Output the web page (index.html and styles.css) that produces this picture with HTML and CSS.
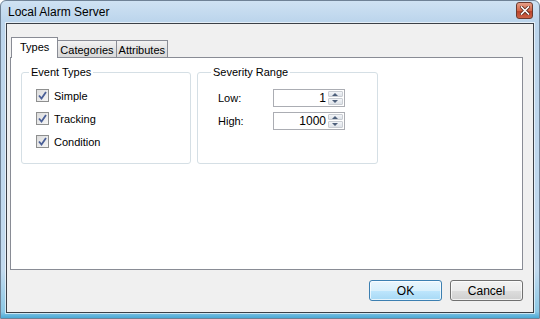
FILE: index.html
```html
<!DOCTYPE html>
<html lang="en">
<head>
    <meta charset="UTF-8">
    <title>Local Alarm Server</title>
    <link rel="stylesheet" href="styles.css">
</head>
<body>
    <div class="window">
        <div class="titlebar">
            <span class="title">Local Alarm Server</span>
            <span class="closeBtn">
                <svg width="10" height="9" viewBox="0 0 10 9">
                    <path d="M1.5 1 L8.5 8 M8.5 1 L1.5 8" stroke="#5a2a1c" stroke-width="3.2" stroke-linecap="square"/>
                    <path d="M1.5 1 L8.5 8 M8.5 1 L1.5 8" stroke="#ffffff" stroke-width="1.6" stroke-linecap="square"/>
                </svg>
            </span>
        </div>

        <div class="client">
            <div class="tabs">
                <span class="tab selected">Types</span>
                <span class="tab">Categories</span>
                <span class="tab">Attributes</span>
            </div>

            <div class="panel">
                <fieldset class="group groupTypes">
                    <legend>Event Types</legend>
                    <label class="check"><span class="box"><svg width="9" height="9" viewBox="0 0 9 9"><path d="M1 4.5 L3.5 7.5 L8 1" fill="none" stroke="#4a5f97" stroke-width="1.8"/></svg></span>Simple</label>
                    <label class="check"><span class="box"><svg width="9" height="9" viewBox="0 0 9 9"><path d="M1 4.5 L3.5 7.5 L8 1" fill="none" stroke="#4a5f97" stroke-width="1.8"/></svg></span>Tracking</label>
                    <label class="check"><span class="box"><svg width="9" height="9" viewBox="0 0 9 9"><path d="M1 4.5 L3.5 7.5 L8 1" fill="none" stroke="#4a5f97" stroke-width="1.8"/></svg></span>Condition</label>
                </fieldset>

                <fieldset class="group groupRange">
                    <legend>Severity Range</legend>
                    <div class="row">
                        <span class="rowLabel">Low:</span>
                        <span class="spinner">
                            <span class="value">1</span>
                            <span class="arrows"><span class="up"></span><span class="down"></span></span>
                        </span>
                    </div>
                    <div class="row">
                        <span class="rowLabel">High:</span>
                        <span class="spinner">
                            <span class="value">1000</span>
                            <span class="arrows"><span class="up"></span><span class="down"></span></span>
                        </span>
                    </div>
                </fieldset>
            </div>

            <div class="buttons">
                <button class="btn default">OK</button>
                <button class="btn">Cancel</button>
            </div>
        </div>
    </div>
</body>
</html>
```

FILE: styles.css
```css
body {
    margin: 0;
    font-family: "Liberation Sans", Arial, sans-serif;
    font-size: 11px;
    color: #000;
    background: #fff;
}

.window {
    width: 540px;
    height: 319px;
    box-sizing: border-box;
    border: 1px solid #6f8296;
    border-radius: 6px 6px 0 0;
    background: linear-gradient(#cfe2f3, #bcd5ec 20px, #c2daee 85%, #8cc9e6 98%, #4aa9d6);
    padding: 0 5px 5px 5px;
    display: flex;
    flex-direction: column;
}

.titlebar {
    height: 23px;
    display: flex;
    align-items: center;
    justify-content: space-between;
}

.title {
    padding-left: 2px;
    font-size: 12px;
    margin-top: -1px;
}

.closeBtn {
    width: 15px;
    height: 15px;
    margin-top: -3px;
    margin-right: 1px;
    border: 1px solid #6c3a2e;
    border-radius: 3px;
    background: linear-gradient(#e59f88, #d5684a 50%, #b9422a 55%, #cc6246);
    display: flex;
    align-items: center;
    justify-content: center;
}

.client {
    flex: 1;
    border: 1px solid #3b4047;
    box-shadow: 0 0 0 1px rgba(255, 255, 255, 0.6);
    background: #f0f0f0;
    padding: 13px 10px 11px 3px;
    display: flex;
    flex-direction: column;
}

.tabs {
    height: 20px;
    display: flex;
    align-items: flex-end;
    padding-left: 1px;
    position: relative;
    z-index: 1;
}

.tab {
    height: 17px;
    box-sizing: border-box;
    padding: 2px 2px 0 2px;
    border: 1px solid #898c95;
    border-bottom: none;
    margin-right: -1px;
    background: linear-gradient(#f2f2f2, #e3e3e3 50%, #d9d9d9);
    display: flex;
    align-items: center;
}

.tab.selected {
    height: 21px;
    margin-bottom: -1px;
    padding: 3px 8px 0 8px;
    background: #fff;
    align-items: flex-start;
}

.panel {
    height: 213px;
    box-sizing: border-box;
    border: 1px solid #898c95;
    background: #fff;
    padding: 8px 10px;
    display: flex;
    gap: 6px;
}

.group {
    margin: 0;
    height: 98px;
    box-sizing: border-box;
    border: 1px solid #d5dfe5;
    border-radius: 3px;
    padding: 6px 0 0 14px;
}

.group legend {
    padding: 0 2px;
    margin-left: -7px;
}

.groupTypes {
    width: 170px;
}

.groupRange {
    width: 181px;
    padding: 8px 0 0 20px;
}

.check {
    display: flex;
    align-items: center;
    height: 23px;
}

.box {
    width: 11px;
    height: 11px;
    border: 1px solid #8e8f8f;
    background: linear-gradient(135deg, #dcdcdc, #f6f6f6);
    margin-right: 5px;
    display: flex;
    align-items: center;
    justify-content: center;
}

.row {
    display: flex;
    align-items: center;
    height: 23px;
}

.rowLabel {
    width: 55px;
}

.spinner {
    width: 72px;
    height: 18px;
    box-sizing: border-box;
    border: 1px solid #abadb3;
    display: flex;
}

.value {
    flex: 1;
    text-align: right;
    padding-right: 1px;
    line-height: 16px;
    font-size: 12px;
}

.arrows {
    width: 15px;
    display: flex;
    flex-direction: column;
    padding: 1px;
    gap: 1px;
}

.up, .down {
    flex: 1;
    border: 1px solid #c9cdd3;
    border-radius: 1px;
    background: linear-gradient(#f3f5f8, #dde2e8);
    position: relative;
}

.up::after, .down::after {
    content: "";
    position: absolute;
    left: 3px;
    top: 1px;
    border-left: 3px solid transparent;
    border-right: 3px solid transparent;
}

.up::after {
    border-bottom: 3px solid #4d5f7a;
}

.down::after {
    border-top: 3px solid #4d5f7a;
}

.buttons {
    display: flex;
    justify-content: flex-end;
    gap: 8px;
    margin-top: 10px;
}

.btn {
    width: 73px;
    height: 21px;
    font-family: "Liberation Sans", Arial, sans-serif;
    font-size: 12px;
    border: 1px solid #707070;
    border-radius: 3px;
    background: linear-gradient(#f2f2f2, #ebebeb 50%, #dddddd 51%, #cfcfcf);
    box-shadow: inset 0 0 0 1px rgba(255, 255, 255, 0.7);
    padding: 0;
}

.btn.default {
    border-color: #3c7fb1;
    background: linear-gradient(#eaf6fd, #d9f0fc 50%, #bee6fd 51%, #a7d9f5);
}
```
